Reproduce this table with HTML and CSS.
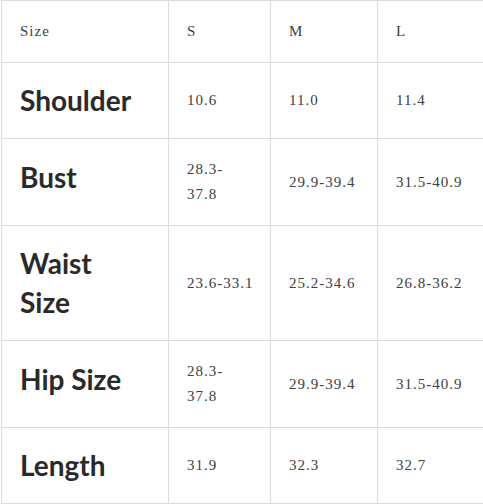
FILE: index.html
```html
<!DOCTYPE html>
<html>
<head>
<meta charset="utf-8">
<link rel="stylesheet" href="styles.css">
</head>
<body>
<table class="size-table">
  <colgroup>
    <col class="c1"><col class="c2"><col class="c3"><col class="c4">
  </colgroup>
  <tr class="head">
    <td>Size</td><td>S</td><td>M</td><td>L</td>
  </tr>
  <tr>
    <th>Shoulder</th><td>10.6</td><td>11.0</td><td>11.4</td>
  </tr>
  <tr>
    <th class="raised">Bust</th><td>28.3-<br>37.8</td><td>29.9-39.4</td><td>31.5-40.9</td>
  </tr>
  <tr>
    <th>Waist<br>Size</th><td>23.6-33.1</td><td>25.2-34.6</td><td>26.8-36.2</td>
  </tr>
  <tr>
    <th class="raised">Hip Size</th><td>28.3-<br>37.8</td><td>29.9-39.4</td><td>31.5-40.9</td>
  </tr>
  <tr>
    <th>Length</th><td>31.9</td><td>32.3</td><td>32.7</td>
  </tr>
</table>
</body>
</html>
```

FILE: styles.css
```css
html, body {
  margin: 0;
  padding: 0;
  background: #fff;
}
.size-table {
  border-collapse: collapse;
  table-layout: fixed;
  width: 490px;
  margin-left: 1px;
}
.c1 { width: 167px; }
.c2 { width: 102px; }
.c3 { width: 107px; }
.c4 { width: 114px; }
.size-table td,
.size-table th {
  border: 1px solid #dcdcdc;
  padding: 18px 18px;
  vertical-align: middle;
  text-align: left;
}
.size-table td {
  font-family: "Liberation Serif", "Times New Roman", serif;
  font-size: 15px;
  letter-spacing: 1px;
  line-height: 25px;
  color: #404040;
  white-space: nowrap;
}
.size-table th {
  font-family: Lato, "Liberation Sans", sans-serif;
  font-weight: 700;
  font-size: 28px;
  line-height: 39px;
  color: #2a2a2a;
}
.size-table th.raised {
  padding-bottom: 28px;
}
```
